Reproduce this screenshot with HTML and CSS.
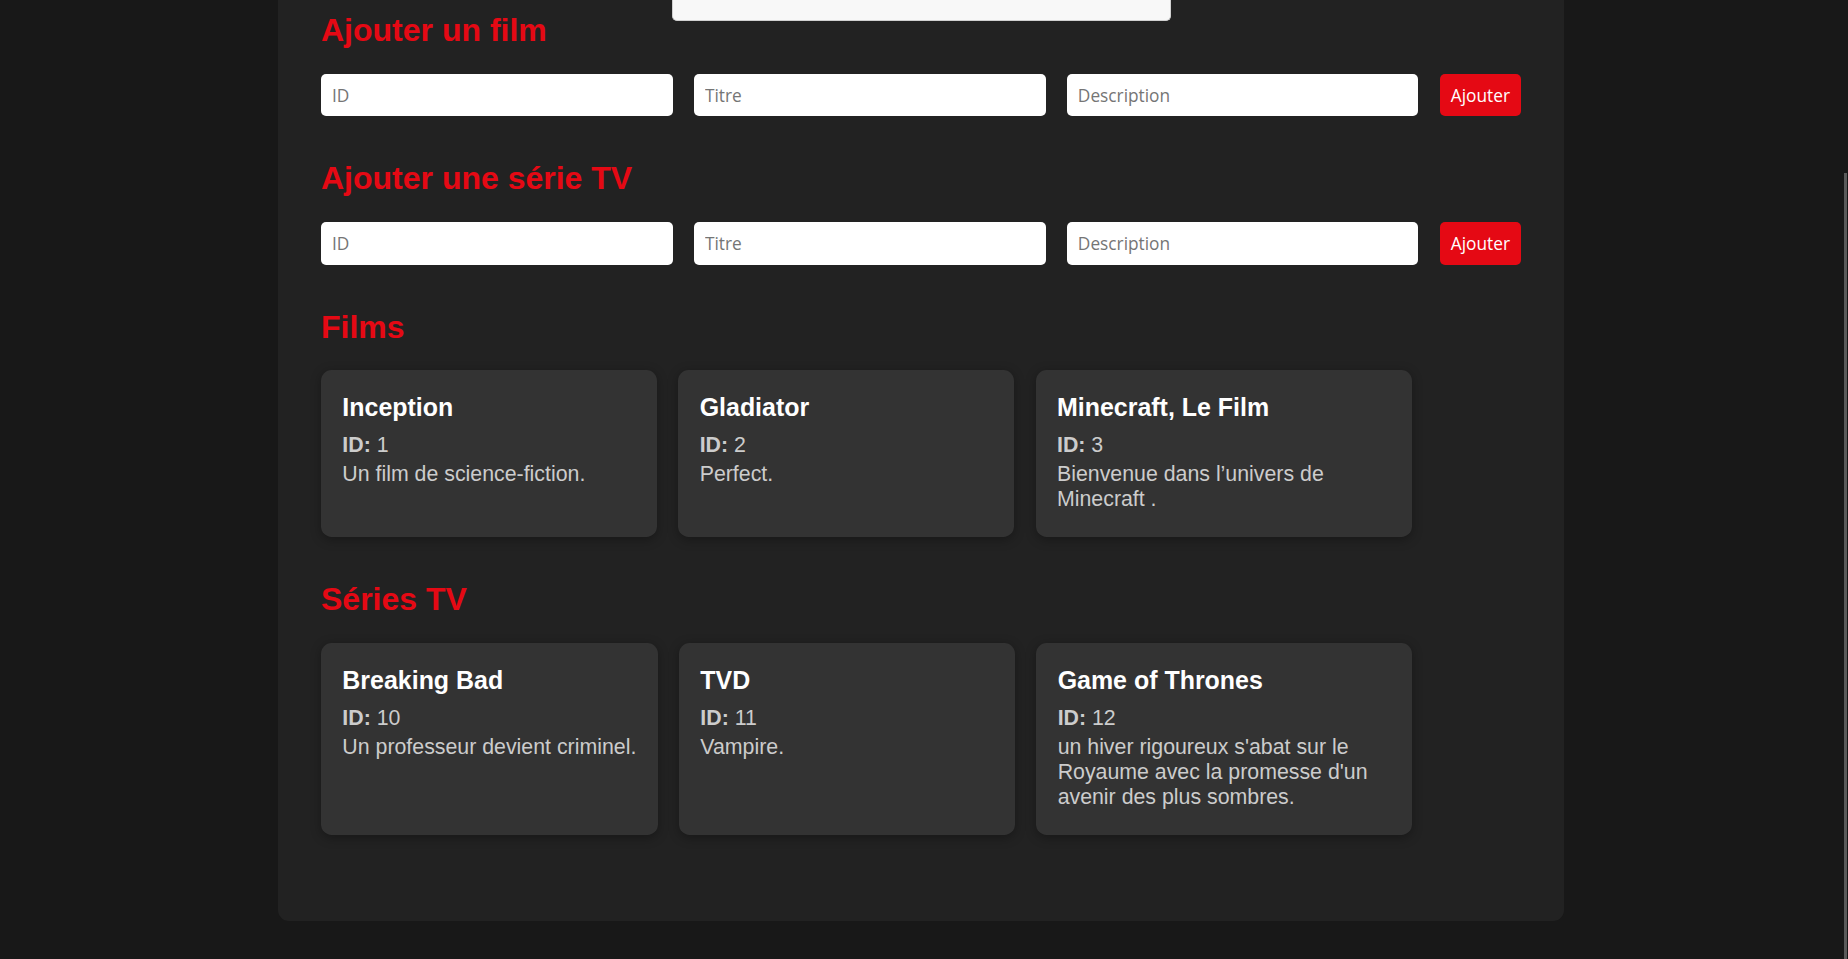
FILE: index.html
```html
<!DOCTYPE html>
<html lang="fr">
<head>
<meta charset="utf-8">
<title>Films et séries TV</title>
<link rel="stylesheet" href="styles.css">
</head>
<body>
<div class="viewport">
  <div class="toast"></div>
  <main class="container">
    <section class="section">
      <h2 class="section-title">Ajouter un film</h2>
      <form class="add-form">
        <input class="field" type="text" placeholder="ID">
        <input class="field" type="text" placeholder="Titre">
        <input class="field" type="text" placeholder="Description">
        <button class="btn" type="button">Ajouter</button>
      </form>
    </section>
    <section class="section">
      <h2 class="section-title">Ajouter une série TV</h2>
      <form class="add-form">
        <input class="field" type="text" placeholder="ID">
        <input class="field" type="text" placeholder="Titre">
        <input class="field" type="text" placeholder="Description">
        <button class="btn" type="button">Ajouter</button>
      </form>
    </section>
    <section class="section">
      <h2 class="section-title">Films</h2>
      <div class="cards">
        <article class="card">
          <h3 class="card-title">Inception</h3>
          <p class="card-id"><strong>ID:</strong> 1</p>
          <p class="card-desc">Un film de science-fiction.</p>
        </article>
        <article class="card">
          <h3 class="card-title">Gladiator</h3>
          <p class="card-id"><strong>ID:</strong> 2</p>
          <p class="card-desc">Perfect.</p>
        </article>
        <article class="card">
          <h3 class="card-title">Minecraft, Le Film</h3>
          <p class="card-id"><strong>ID:</strong> 3</p>
          <p class="card-desc">Bienvenue dans l’univers de Minecraft .</p>
        </article>
      </div>
    </section>
    <section class="section">
      <h2 class="section-title">Séries TV</h2>
      <div class="cards">
        <article class="card">
          <h3 class="card-title">Breaking Bad</h3>
          <p class="card-id"><strong>ID:</strong> 10</p>
          <p class="card-desc">Un professeur devient criminel.</p>
        </article>
        <article class="card">
          <h3 class="card-title">TVD</h3>
          <p class="card-id"><strong>ID:</strong> 11</p>
          <p class="card-desc">Vampire.</p>
        </article>
        <article class="card">
          <h3 class="card-title">Game of Thrones</h3>
          <p class="card-id"><strong>ID:</strong> 12</p>
          <p class="card-desc">un hiver rigoureux s'abat sur le Royaume avec la promesse d'un avenir des plus sombres.</p>
        </article>
      </div>
    </section>
  </main>
</div>
<div class="scrollbar"><div class="thumb"></div></div>
</body>
</html>
```

FILE: styles.css
```css
html, body {
  margin: 0;
  height: 100%;
  overflow: hidden;
}

body {
  background: #181818;
  display: flex;
  font-family: "Liberation Sans", Arial, sans-serif;
}

.viewport {
  flex: 1;
  min-width: 0;
  position: relative;
}

.toast {
  position: absolute;
  top: 0;
  left: calc(50% - 249.5px);
  width: 499px;
  height: 21px;
  box-sizing: border-box;
  background: #f8f8f8;
  border: 1px solid #d0d0d0;
  border-top: none;
  border-radius: 0 0 5px 5px;
}

.container {
  width: 1286px;
  box-sizing: border-box;
  margin: 0 auto;
  background: #222222;
  padding: 12px 43px 42px;
  border-radius: 0 0 11px 11px;
}

.section {
  margin-bottom: 44px;
}

.section-title {
  color: #e50914;
  font-size: 32px;
  font-weight: bold;
  line-height: normal;
  margin: 0 0 24.7px;
}

.add-form {
  display: flex;
  gap: 21.33px;
}

.field {
  flex: 1;
  min-width: 0;
  height: 42.67px;
  box-sizing: border-box;
  border: none;
  border-radius: 5px;
  padding: 0 11px;
  background: #ffffff;
  color: #222;
  font-family: "Open Sans", sans-serif;
  font-size: 17.3px;
  outline: none;
}

.field::placeholder {
  color: #757575;
}

.btn {
  flex: none;
  height: 42.67px;
  padding: 0 11px;
  background: #e50914;
  color: #ffffff;
  border: none;
  border-radius: 5px;
  font-family: "Open Sans", sans-serif;
  font-size: 17.3px;
}

.cards {
  display: flex;
  gap: 21.33px;
  align-items: stretch;
}

.card {
  flex: 0 1 auto;
  box-sizing: border-box;
  min-width: 336px;
  max-width: 376px;
  padding: 23px 21.33px 20px;
  background: #333333;
  border-radius: 10.67px;
  box-shadow: 0 2.67px 10.67px rgba(0, 0, 0, 0.3);
}

.card-title {
  color: #ffffff;
  font-size: 24.96px;
  font-weight: bold;
  line-height: normal;
  margin: 0 0 10.7px;
}

.card p {
  color: #cccccc;
  font-size: 21.33px;
  line-height: normal;
}

.card-id {
  margin: 0 0 4.2px;
}

.card-desc {
  margin: 0 0 5px;
}

.scrollbar {
  flex: none;
  width: 6px;
  display: flex;
  flex-direction: column;
}

.thumb {
  flex: 1;
  margin: 173px 1px 0 2px;
  background: #5a5a5a;
}
```
